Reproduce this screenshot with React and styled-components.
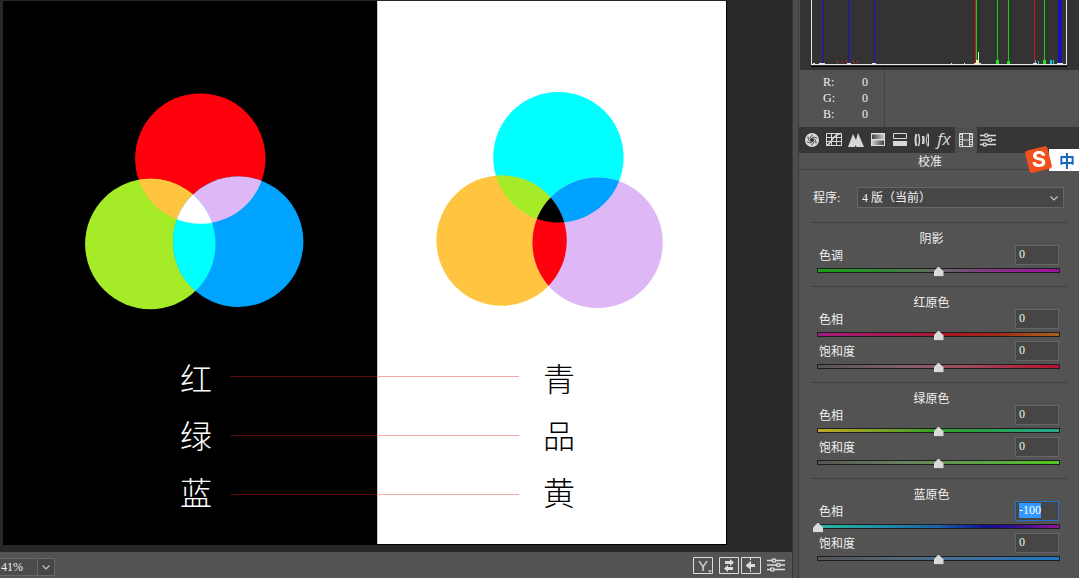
import React, { useEffect, useRef, useState } from 'react';
import styled, { createGlobalStyle } from 'styled-components';

const GlobalStyle = createGlobalStyle`
    * {
        box-sizing: border-box;
    }
    body {
        margin: 0;
        background: #282828;
        color: #f0f0f0;
        font-family: "Liberation Serif", "Noto Sans CJK SC", serif;
        font-size: 12px;
        line-height: 16px;
    }
    button, input, select {
        font: inherit;
        color: inherit;
        margin: 0;
        padding: 0;
    }
`;

const Page = styled.div`
    display: flex;
    min-height: 100vh;
    overflow: hidden;
`;

const Main = styled.main`
    flex: 1;
    min-width: 0;
    display: flex;
    flex-direction: column;
`;

const Stage = styled.div`
    flex: 1;
    display: flex;
    padding: 1px 65px 7px 3px;
`;

const Artboard = styled.div`
    flex: 1;
    display: grid;
    grid-template-columns: 374fr 349fr;
    border: solid #000;
    border-width: 0 1px 1px 0;
`;

const Half = styled.section`
    background: ${props => props.$light ? '#fff' : '#000'};
    color: ${props => props.$light ? '#000' : '#fff'};
    box-shadow: ${props => props.$light ? 'inset 1px 0 #c8c8c8' : 'none'};
`;

const Venn = styled.svg`
    display: block;
    width: 100%;
`;

const Names = styled.div`
    display: flex;
    gap: 18px;
    padding: ${props => props.$light ? '0 151px 0 0' : '0 0 0 177px'};
`;

const Words = styled.div`
    padding-top: 18px;
    font-family: "Noto Sans CJK SC", sans-serif;
    font-size: 32px;
    font-weight: 300;
    line-height: 57px;
`;

const Lines = styled.div`
    flex: 1;
    padding-top: 16px;
    margin-right: ${props => props.$light ? '6px' : '0'};
`;

const Line = styled.div`
    height: 59px;
    display: flex;
    align-items: center;
    &::before {
        content: "";
        flex: 1;
        height: 1px;
        background: ${props => props.$light ? '#f5a8a8' : '#5c0808'};
    }
`;

const StatusBar = styled.footer`
    height: 26px;
    display: flex;
    align-items: center;
    padding-right: 7px;
    background: #535353;
`;

const Zoom = styled.label`
    display: flex;
    align-items: center;
    width: 55px;
    height: 18px;
    margin-top: 3px;
    border: 1px solid #686868;
    border-left: none;
    background: #4b4b4b;
    svg {
        width: 17px;
        height: 16px;
        border-left: 1px solid #686868;
        background: #464646;
    }
`;

const ZoomSelect = styled.select`
    flex: 1;
    min-width: 0;
    padding-left: 1px;
    appearance: none;
    border: none;
    background: none;
`;

const StatusButtons = styled.div`
    display: flex;
    margin-left: auto;
    gap: 2px;
`;

const StatusButton = styled.button`
    display: flex;
    border: none;
    background: none;
    color: #dcdcdc;
    margin-right: ${props => props.$gap ? '4px' : '0'};
`;

const Panel = styled.aside`
    flex: 0 0 287px;
    border-left: 1px solid #363636;
    background: #4d4d4d;
    padding-left: 5px;
`;

const PanelBody = styled.div`
    height: 100%;
    border-left: 1px solid #3a3a3a;
    background: #535353;
`;

const Histogram = styled.svg`
    display: block;
    width: 100%;
    background: #333;
`;

const Readout = styled.dl`
    margin: 0;
    width: 86px;
    height: 57px;
    padding: 4px 16px 0 24px;
    border-right: 1px solid #424242;
`;

const Channel = styled.div`
    display: flex;
    justify-content: space-between;
    height: 16px;
    dd {
        margin: 0;
    }
`;

const Toolbar = styled.nav`
    display: flex;
    height: 26px;
    padding-left: 2px;
    background: #363636;
`;

const Tool = styled.button`
    display: flex;
    align-items: center;
    justify-content: center;
    width: 22px;
    border: none;
    background: ${props => props.$active ? '#4f4f4f' : 'none'};
    color: #d8d8d8;
`;

const PanelTitle = styled.h1`
    height: 17px;
    margin: 0;
    padding-right: 18px;
    border-bottom: 1px solid #424242;
    font-size: 12px;
    font-weight: normal;
    line-height: 18px;
    text-align: center;
`;

const Program = styled.div`
    display: flex;
    align-items: center;
    justify-content: space-between;
    padding: 17px 15px 14px 14px;
`;

const Dropdown = styled.div`
    display: flex;
    align-items: center;
    width: 207px;
    height: 21px;
    padding-right: 1px;
    border: 1px solid #666;
    background: #464646;
`;

const ProgramSelect = styled.select`
    flex: 1;
    padding-left: 4px;
    appearance: none;
    border: none;
    background: none;
`;

const Group = styled.section`
    margin: 0 12px;
    padding: 8px 3px 9px 2px;
    border-top: 1px solid #424242;
`;

const GroupTitle = styled.h2`
    height: 14px;
    margin: 0;
    padding-right: 14px;
    font-size: 12px;
    font-weight: normal;
    line-height: 16px;
    text-align: center;
`;

const SliderHead = styled.div`
    display: flex;
    justify-content: space-between;
    height: 20px;
    padding: 0 5px 0 6px;
    line-height: 22px;
`;

const ValueInput = styled.input`
    width: 44px;
    height: 20px;
    padding: 0 3px 2px;
    border: 1px solid #666;
    background: #464646;
    line-height: 16px;
    outline: none;
    &:focus {
        border-color: #2a6fc9;
    }
    &::selection {
        background: #3399ff;
        color: #fff;
    }
`;

const Range = styled.input`
    display: block;
    width: 100%;
    height: 12px;
    appearance: none;
    background:
        linear-gradient(to right, ${props => props.$colors}) 5px 4px / calc(100% - 10px) 3px no-repeat,
        linear-gradient(#1e1e1e, #1e1e1e) 4px 3px / calc(100% - 8px) 5px no-repeat;
    &::-webkit-slider-thumb {
        appearance: none;
        width: 10px;
        height: 10px;
        margin-top: 1px;
        border: solid #2b2b2b;
        border-width: 0 0 1px;
        background: #dadada;
        clip-path: polygon(50% 0, 100% 50%, 100% 100%, 0 100%, 0 50%);
    }
`;

const InputMethod = styled.div`
    position: fixed;
    top: 145px;
    right: 0;
    display: flex;
    align-items: center;
`;

const InputMode = styled.span`
    width: 30px;
    height: 22px;
    margin-left: -4px;
    padding-left: 10px;
    background: #fff;
    color: #1769c0;
    font-family: "Noto Sans CJK SC", sans-serif;
    font-size: 16px;
    font-weight: bold;
    line-height: 22px;
`;

const Logo = styled.svg`
    position: relative;
    z-index: 1;
    overflow: visible;
`;

const lightCircles = {
    id: 'light',
    viewBox: '3 1 374 330',
    circles: [[200.3, 158.6], [150.3, 244], [238.2, 241.7]],
    fills: ['#ff000d', '#a6eb28', '#00a4ff'],
    overlaps: ['#ffc440', '#deb8f6', '#00ffff'],
    center: '#fff'
};

const inkCircles = {
    id: 'ink',
    viewBox: '377 1 349 330',
    circles: [[558.4, 157.2], [501.6, 240.6], [597.6, 242.8]],
    fills: ['#00ffff', '#ffc440', '#deb8f6'],
    overlaps: ['#a6eb28', '#00a2ff', '#ff000d'],
    center: '#000'
};

const groups = [
    {
        title: '阴影',
        sliders: [
            { label: '色调', value: 0, colors: '#18a018, #2f8a2f 25%, #666 50%, #8a2f8a 75%, #a010a0' }
        ]
    },
    {
        title: '红原色',
        sliders: [
            { label: '色相', value: 0, colors: '#a01c80, #a81c48 35%, #a81820 55%, #a02c18 75%, #a8641c' },
            { label: '饱和度', value: 0, colors: '#555, #806068 35%, #a04858 65%, #b81030' }
        ]
    },
    {
        title: '绿原色',
        sliders: [
            { label: '色相', value: 0, colors: '#c0a828, #80a028 25%, #30a028 50%, #28a048 70%, #28a898' },
            { label: '饱和度', value: 0, colors: '#555, #688060 35%, #60a048 65%, #50c820' }
        ]
    },
    {
        title: '蓝原色',
        sliders: [
            { label: '色相', value: -100, colors: '#28b8a0, #2090a8 25%, #1c60a8 50%, #101090 70%, #401090 85%, #901898' },
            { label: '饱和度', value: 0, colors: '#555, #546878 35%, #3c70a0 65%, #1c78c8' }
        ]
    }
];

function Circles({ id, viewBox, circles, fills, overlaps, center }) {
    const [a, b, c] = circles;
    const clip = n => `url(#${id}${n})`;
    const disc = ([cx, cy], fill) => <circle cx={cx} cy={cy} r="65.2" fill={fill} />;
    return (
        <Venn viewBox={viewBox} aria-hidden="true">
            <defs>
                {circles.map((circle, i) => (
                    <clipPath id={id + i} key={i}>{disc(circle)}</clipPath>
                ))}
            </defs>
            {disc(a, fills[0])}
            {disc(b, fills[1])}
            {disc(c, fills[2])}
            <g clipPath={clip(0)}>
                {disc(b, overlaps[0])}
                {disc(c, overlaps[1])}
            </g>
            <g clipPath={clip(1)}>
                {disc(c, overlaps[2])}
                <g clipPath={clip(2)}>{disc(a, center)}</g>
            </g>
        </Venn>
    );
}

function NameLines({ light }) {
    return (
        <Lines $light={light}>
            <Line $light={light} />
            <Line $light={light} />
            <Line $light={light} />
        </Lines>
    );
}

function Chevron() {
    return (
        <svg width="16" height="16" viewBox="0 0 16 16" fill="none" stroke="#c4c4c4" strokeWidth="1.2">
            <path d="M4.5 6.5L8 10l3.5-3.5" />
        </svg>
    );
}

function SlidersIcon({ width = 16 }) {
    return (
        <svg width={width} height="16" viewBox="0 0 16 16" preserveAspectRatio="none" fill="none" stroke="currentColor" strokeWidth="1.4">
            <path d="M0 3.5h4.5M8 3.5h8M0 8h8.5M12 8h4M0 12.5h3M6.5 12.5H16" />
            <circle cx="6.2" cy="3.5" r="1.6" />
            <circle cx="10.2" cy="8" r="1.6" />
            <circle cx="4.8" cy="12.5" r="1.6" />
        </svg>
    );
}

const tools = [
    {
        name: '基本',
        icon: (
            <g>
                <circle cx="8" cy="8" r="7" fill="currentColor" />
                <circle cx="8" cy="8" r="2" fill="#363636" />
                {[0, 60, 120, 180, 240, 300].map(angle => (
                    <path key={angle} d="M8 5.4Q10.5 4.6 13 6.2" transform={`rotate(${angle} 8 8)`} stroke="#363636" strokeWidth=".8" fill="none" />
                ))}
            </g>
        )
    },
    {
        name: '色调曲线',
        icon: (
            <g fill="none" stroke="currentColor">
                <path d="M.5 1.5h15v12H.5zM.5 5.5h15M.5 9.5h15M5.5 1.5v12M10.5 1.5v12" />
                <path d="M.5 13.5C6 12 5 3 15 1.5" strokeWidth="1.6" />
            </g>
        )
    },
    { name: '细节', icon: <path d="M0 15L5 2l3 6 2-7 6 14H8.5l-1-2-.5 2z" fill="currentColor" /> },
    {
        name: 'HSL 调整',
        icon: (
            <g>
                <path d="M1 1h14v13H1z" fill="#dcdcdc" />
                <path d="M2 2.5h12V7H2z" fill="url(#fadeRight)" />
                <path d="M2 8.5h12V13H2z" fill="url(#fadeLeft)" />
            </g>
        )
    },
    {
        name: '分离色调',
        icon: (
            <g>
                <path d="M1.5 1.5h13v5h-13z" fill="none" stroke="currentColor" />
                <path d="M1 9h14v5H1z" fill="currentColor" />
            </g>
        )
    },
    {
        name: '镜头校正',
        icon: (
            <g fill="none" stroke="currentColor">
                <path d="M2.5 2q-2 6 0 12" strokeWidth="2" />
                <path d="M4.5 2q2 6 0 12" strokeWidth="1.4" />
                <path d="M10 4.5H8.500q1 3.500 0 7H10M10 4.500v7" strokeWidth="1.2" />
                <path d="M13.5 2q-2.500 6 0 12h1V2z" />
            </g>
        )
    },
    {
        name: '效果',
        icon: (
            <text x="8" y="13" textAnchor="middle" fill="currentColor" fontFamily="Open Sans, sans-serif" fontStyle="italic" fontSize="17">fx</text>
        )
    },
    {
        name: '校准',
        icon: (
            <g fill="none" stroke="currentColor">
                <path d="M1.5 1.5h13v13h-13zM4.5 1.5v13M11.5 1.5v13M4.5 8h7" />
                <path d="M3 2v12M13 2v12" strokeWidth="2" strokeDasharray="1 1.5" />
            </g>
        )
    },
    { name: '预设', icon: null }
];

function HistogramChart() {
    return (
        <Histogram viewBox="799 0 280 70" role="img" aria-label="直方图">
            <path d="M799 0h1v70h-1z" fill="#535353" />
            <path d="M837 60h1v3h-1zM842 61h1v2h-1zM846 60h1v3h-1zM853 60h1v3h-1zM857 60h1v3h-1z" fill="#b02828" />
            <path d="M1035 60h1v4h-1zM1038 61h1v3h-1zM1050 60h2v4h-2zM1053 60h1v4h-1z" fill="#20c8d0" />
            <path d="M823 0h1v64h-1zM848 0h1v64h-1zM874 0h1v64h-1z" fill="#1414d8" />
            <path d="M1058 0h4v64h-4z" fill="#1414b8" />
            <path d="M975 0h1v64h-1zM1034 0h1v64h-1z" fill="#d01418" />
            <path d="M976 0h1v64h-1zM997 0h1v64h-1zM1008 0h1v64h-1zM1044 0h1v64h-1z" fill="#14d018" />
            <path d="M996 60h3v4h-3zM1007 61h3v3h-3zM1043 60h3v4h-3z" fill="#30e030" />
            <path d="M978 52h1v12h-1zM976 60h2v4h-2z" fill="#f0f0b0" />
            <path d="M811.5 0v65M1066.5 0v65M811 64.5h256" stroke="#e6e6e6" fill="none" />
            <path d="M813 63h2v1h-2zM819 63h6v1h-6zM847 63h4v1h-4zM872 63h4v1h-4zM951 63h1v1h-1zM964 63h1v1h-1zM974 63h7v1h-7zM1033 63h4v1h-4zM1057 63h6v1h-6z" fill="#e6e6e6" />
            <path d="M811 66h256v1H811z" fill="#000" />
        </Histogram>
    );
}

function Slider({ id, label, value, colors }) {
    const [current, setCurrent] = useState(value);
    const input = useRef(null);
    useEffect(() => {
        if (value === -100) {
            input.current.focus();
            input.current.select();
        }
    }, [value]);
    return (
        <div>
            <SliderHead>
                <label htmlFor={id}>{label}</label>
                <ValueInput id={id} ref={input} value={current} onChange={e => setCurrent(e.target.value)} />
            </SliderHead>
            <Range
                type="range"
                min="-100"
                max="100"
                aria-label={label}
                value={Number(current) || 0}
                onChange={e => setCurrent(e.target.value)}
                $colors={colors}
            />
        </div>
    );
}

function App() {
    return (
        <Page>
            <GlobalStyle />
            <Main>
                <Stage>
                    <Artboard>
                        <Half>
                            <Circles {...lightCircles} />
                            <Names>
                                <Words>
                                    <div>红</div>
                                    <div>绿</div>
                                    <div>蓝</div>
                                </Words>
                                <NameLines />
                            </Names>
                        </Half>
                        <Half $light>
                            <Circles {...inkCircles} />
                            <Names $light>
                                <NameLines light />
                                <Words>
                                    <div>青</div>
                                    <div>品</div>
                                    <div>黄</div>
                                </Words>
                            </Names>
                        </Half>
                    </Artboard>
                </Stage>
                <StatusBar>
                    <Zoom>
                        <ZoomSelect aria-label="缩放">
                            <option>41%</option>
                        </ZoomSelect>
                        <Chevron />
                    </Zoom>
                    <StatusButtons>
                        <StatusButton $gap aria-label="切换视图">
                            <svg width="20" height="17" viewBox="0 0 20 17" fill="none" stroke="currentColor">
                                <path d="M.5.5h19v16H.5z" />
                                <text x="10" y="14" textAnchor="middle" fill="currentColor" stroke="none" fontFamily="Liberation Sans, sans-serif" fontSize="15">Y</text>
                                <path d="M15 13.5h4l-2 2z" fill="currentColor" stroke="none" />
                            </svg>
                        </StatusButton>
                        <StatusButton aria-label="交换设置">
                            <svg width="20" height="17" viewBox="0 0 20 17" fill="none" stroke="currentColor">
                                <path d="M.5.5h19v16H.5z" />
                                <path d="M6 4h5V2l4 3.5L11 9V7H6zM14 10H9V8l-4 3.5L9 15v-2h5z" fill="currentColor" stroke="none" />
                            </svg>
                        </StatusButton>
                        <StatusButton $gap aria-label="复制设置">
                            <svg width="20" height="17" viewBox="0 0 20 17" fill="none" stroke="currentColor">
                                <path d="M.5.5h19v16H.5z" />
                                <path d="M9.5 1v15" strokeDasharray="2 1" />
                                <path d="M4.5 8.5L10 4v3h4v3h-4v3z" fill="currentColor" stroke="none" />
                            </svg>
                        </StatusButton>
                        <StatusButton aria-label="预览选项">
                            <SlidersIcon width={18} />
                        </StatusButton>
                    </StatusButtons>
                </StatusBar>
            </Main>
            <Panel>
                <PanelBody>
                    <HistogramChart />
                    <Readout>
                        {['R', 'G', 'B'].map(name => (
                            <Channel key={name}>
                                <dt>{name}:</dt>
                                <dd>0</dd>
                            </Channel>
                        ))}
                    </Readout>
                    <Toolbar>
                        {tools.map(({ name, icon }) => (
                            <Tool key={name} aria-label={name} $active={name === '校准'}>
                                {icon ? (
                                    <svg width="16" height="16" viewBox="0 0 16 16" overflow="visible">
                                        <defs>
                                            <linearGradient id="fadeRight">
                                                <stop offset="0" stopColor="#444" />
                                                <stop offset="1" stopColor="#ccc" />
                                            </linearGradient>
                                            <linearGradient id="fadeLeft">
                                                <stop offset="0" stopColor="#ccc" />
                                                <stop offset="1" stopColor="#444" />
                                            </linearGradient>
                                        </defs>
                                        {icon}
                                    </svg>
                                ) : <SlidersIcon />}
                            </Tool>
                        ))}
                    </Toolbar>
                    <PanelTitle>校准</PanelTitle>
                    <Program>
                        <label htmlFor="program">程序:</label>
                        <Dropdown>
                            <ProgramSelect id="program">
                                <option>4 版（当前）</option>
                            </ProgramSelect>
                            <Chevron />
                        </Dropdown>
                    </Program>
                    {groups.map(({ title, sliders }, i) => (
                        <Group key={title}>
                            <GroupTitle>{title}</GroupTitle>
                            {sliders.map(slider => (
                                <Slider key={slider.label} id={`value-${i}-${slider.label}`} {...slider} />
                            ))}
                        </Group>
                    ))}
                </PanelBody>
            </Panel>
            <InputMethod>
                <Logo width="28" height="29" viewBox="0 0 28 29" aria-label="输入法">
                    <rect x="2" y="3" width="23" height="23" rx="3" fill="#f0501e" transform="rotate(-14 14 14.5)" />
                    <text x="14" y="22" textAnchor="middle" fill="#fff" fontFamily="Inter, sans-serif" fontWeight="bold" fontSize="22">S</text>
                </Logo>
                <InputMode>中</InputMode>
            </InputMethod>
        </Page>
    );
}

export default App;
